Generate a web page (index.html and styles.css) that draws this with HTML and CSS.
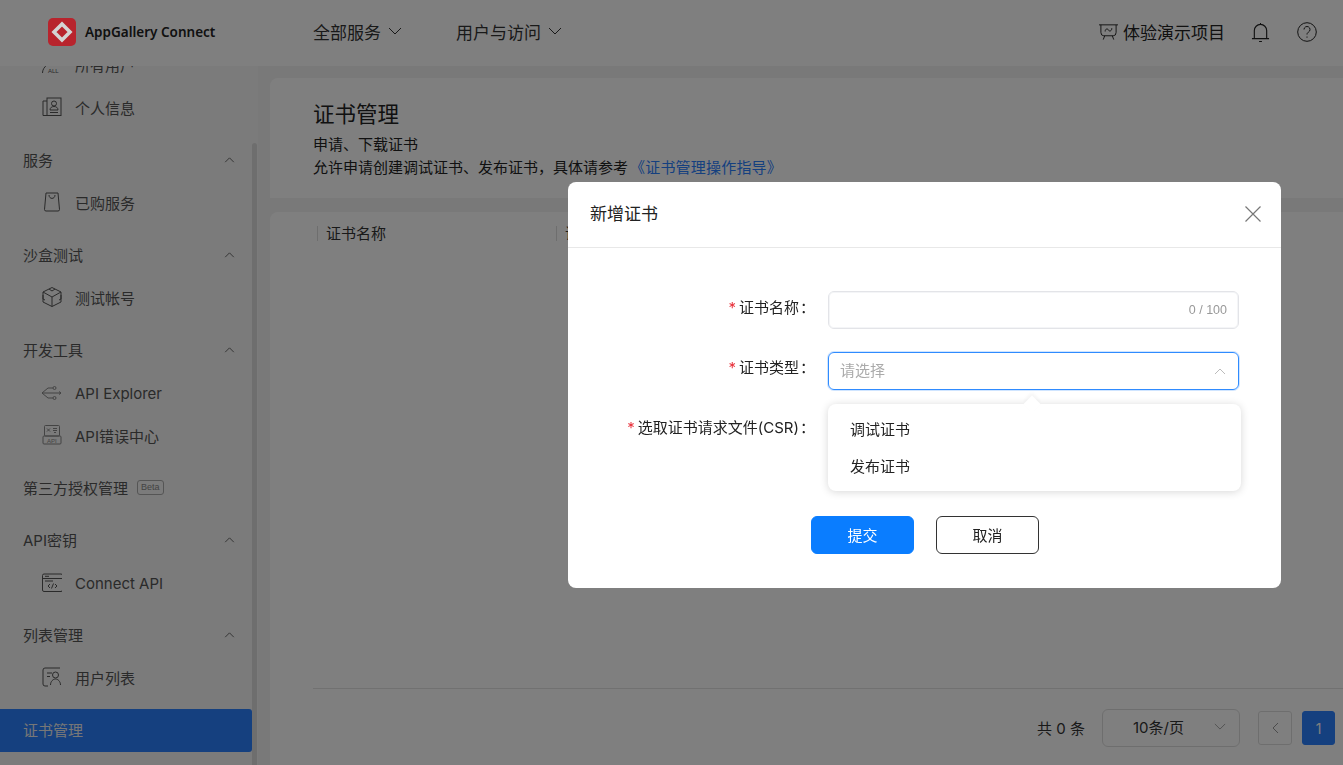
FILE: index.html
```html
<!DOCTYPE html>
<html lang="zh-CN">
<head>
    <meta charset="UTF-8">
    <meta name="viewport" content="width=device-width, initial-scale=1.0">
    <title>证书管理</title>
    <link rel="stylesheet" href="styles.css">
</head>
<body>
    <div class="app">
        <header class="topbar">
            <div class="brand">
                <svg class="logo" viewBox="0 0 28 28">
                    <rect width="28" height="28" rx="5" fill="#b8242d"/>
                    <path d="M14 6 22 14 14 22 6 14Z" fill="none" stroke="#d4d4d4" stroke-width="3.6"/>
                </svg>
                <span class="brand-name">AppGallery Connect</span>
            </div>
            <nav class="topnav">
                <a class="topnav-item">全部服务
                    <svg class="chev-down" viewBox="0 0 14 8"><path d="M1 1l6 6 6-6"/></svg>
                </a>
                <a class="topnav-item">用户与访问
                    <svg class="chev-down" viewBox="0 0 14 8"><path d="M1 1l6 6 6-6"/></svg>
                </a>
            </nav>
            <div class="topbar-right">
                <a class="demo">
                    <svg class="demo-icon" viewBox="0 0 22 20">
                        <path d="M1 3h20M3 3v8q0 3.500 3 3.500h10q3 0 3-3.500V3M7 14.500 5.500 18.500M15 14.500l1.500 4"/>
                        <path d="M7.500 10c0-3.500 3-3 3.500-1.500s3.500 1.500 3.500-2"/>
                    </svg>
                    体验演示项目
                </a>
                <svg class="bell" viewBox="0 0 20 22">
                    <path d="M1 17.500h18M3.500 17.500V9a6.500 6.500 0 0 1 13 0v8.500M10 1v1.500M8.500 20.500h3"/>
                </svg>
                <svg class="help" viewBox="0 0 20 20">
                    <circle cx="10" cy="10" r="9.300"/>
                    <path d="M7 7.500a3 3 0 1 1 4.500 2.600c-1 .6-1.500 1.200-1.500 2.400"/>
                    <path d="M10 14.500v1.200"/>
                </svg>
            </div>
        </header>

        <div class="workspace">
            <aside class="sidebar">
                <div class="scrollbar"></div>
                <ul class="menu">
                    <li class="menu-item">
                        <svg class="menu-icon" viewBox="0 0 20 20">
                            <path d="M.5 19c0-3 1.500-6 5-8.500"/>
                            <text class="icon-text" x="6" y="19">ALL</text>
                        </svg>
                        所有用户
                    </li>
                    <li class="menu-item">
                        <svg class="menu-icon" viewBox="0 0 20 20">
                            <path d="M5 4H1v14.500h4"/>
                            <rect x="5" y="1" width="14" height="17.500"/>
                            <circle cx="12" cy="6.500" r="2.500"/>
                            <path d="M8 13c0-2.500 2-3.500 4-3.500s4 1 4 3.500zM8 15.500h8"/>
                        </svg>
                        个人信息
                    </li>
                    <li class="menu-title">服务
                        <svg class="chev-up" viewBox="0 0 12 7"><path d="M1 6l5-5 5 5"/></svg>
                    </li>
                    <li class="menu-item">
                        <svg class="menu-icon" viewBox="0 0 20 20">
                            <path d="M4 1h12l1.500 16.500a1.500 1.500 0 0 1-1.500 1.500H4a1.500 1.500 0 0 1-1.500-1.500zM7 3c0 4.500 6 4.500 6 0"/>
                        </svg>
                        已购服务
                    </li>
                    <li class="menu-title">沙盒测试
                        <svg class="chev-up" viewBox="0 0 12 7"><path d="M1 6l5-5 5 5"/></svg>
                    </li>
                    <li class="menu-item">
                        <svg class="menu-icon" viewBox="0 0 20 20">
                            <path d="M10 .5l9 4.500v10l-9 4.500-9-4.500V5zM1 5l9 5 9-5M10 10v9.500M1 8v4l2 1M19 8v4l-2 1M7 2l3 2 3-2"/>
                        </svg>
                        测试帐号
                    </li>
                    <li class="menu-title">开发工具
                        <svg class="chev-up" viewBox="0 0 12 7"><path d="M1 6l5-5 5 5"/></svg>
                    </li>
                    <li class="menu-item menu-item-latin">
                        <svg class="menu-icon icon-light" viewBox="0 0 20 20">
                            <path d="M0 10h19M17 8.500l2 1.500-2 1.500M0 10l6-5h5M0 10l6 5h5"/>
                            <circle cx="12.500" cy="5" r="1.500"/>
                            <circle cx="12.500" cy="15" r="1.500"/>
                        </svg>
                        API Explorer
                    </li>
                    <li class="menu-item">
                        <svg class="menu-icon icon-light" viewBox="0 0 20 20">
                            <rect x="2.500" y="0.500" width="15" height="10.500" rx="1"/>
                            <rect x="1" y="11" width="18" height="8" rx="1"/>
                            <path d="M5 3.500l3 3M8 3.500l-3 3M11 3.500h4M11 5.500h4M12 7.500h2"/>
                            <text class="icon-text" x="5" y="17.500">API</text>
                        </svg>
                        API错误中心
                    </li>
                    <li class="menu-title menu-title-plain">第三方授权管理
                        <span class="beta">Beta</span>
                    </li>
                    <li class="menu-title">API密钥
                        <svg class="chev-up" viewBox="0 0 12 7"><path d="M1 6l5-5 5 5"/></svg>
                    </li>
                    <li class="menu-item menu-item-latin">
                        <svg class="menu-icon" viewBox="0 0 20 20">
                            <rect x="0.500" y="1" width="20" height="17.500" rx="1.500"/>
                            <path d="M.5 5.500h20M3 3.300h4M3 8h8M8 11l-2 2 2 2M13 11l2 2-2 2M11.500 10.500l-2 5"/>
                        </svg>
                        Connect API
                    </li>
                    <li class="menu-title">列表管理
                        <svg class="chev-up" viewBox="0 0 12 7"><path d="M1 6l5-5 5 5"/></svg>
                    </li>
                    <li class="menu-item">
                        <svg class="menu-icon" viewBox="0 0 20 20">
                            <path d="M18 1H3Q1 1 1 3v14q0 2 2 2h3M5 6h5M5 9.500h3"/>
                            <circle cx="13.500" cy="8" r="3"/>
                            <path d="M8.500 18c0-3.500 2.500-6 5-6s5 2.500 5 6"/>
                        </svg>
                        用户列表
                    </li>
                    <li class="menu-title menu-title-plain menu-active">证书管理</li>
                </ul>
            </aside>

            <main class="content">
                <section class="card intro">
                    <h1>证书管理</h1>
                    <p>申请、下载证书</p>
                    <p>允许申请创建调试证书、发布证书，具体请参考<a class="link">《证书管理操作指导》</a></p>
                </section>
                <section class="card list">
                    <div class="table-head">
                        <div class="col col-name">证书名称</div>
                        <div class="col">证书类型</div>
                    </div>
                    <div class="table-body"></div>
                    <div class="pager">
                        <span class="total">共 0 条</span>
                        <div class="page-size">10条/页
                            <svg class="chev-down chev-small" viewBox="0 0 14 8"><path d="M1 1l6 6 6-6"/></svg>
                        </div>
                        <button class="page-btn">
                            <svg class="chev-left" viewBox="0 0 7 12"><path d="M6 1L1 6l5 5"/></svg>
                        </button>
                        <button class="page-btn page-current">1</button>
                    </div>
                </section>
            </main>
        </div>
    </div>

    <div class="overlay">
        <div class="modal">
            <div class="modal-head">
                <span class="modal-title">新增证书</span>
                <svg class="close" viewBox="0 0 16 16"><path d="M.5.5l15 15M15.500.5l-15 15"/></svg>
            </div>
            <form class="modal-body">
                <div class="form-row">
                    <label class="form-label"><i>*</i>证书名称<span class="colon">：</span></label>
                    <div class="field">
                        <span class="counter">0 / 100</span>
                    </div>
                </div>
                <div class="form-row">
                    <label class="form-label"><i>*</i>证书类型<span class="colon">：</span></label>
                    <div class="field field-focus">
                        <span class="placeholder">请选择</span>
                        <svg class="chev-up chev-light" viewBox="0 0 12 7"><path d="M1 6l5-5 5 5"/></svg>
                        <div class="popover">
                            <span class="popover-arrow"></span>
                            <div class="option">调试证书</div>
                            <div class="option">发布证书</div>
                        </div>
                    </div>
                </div>
                <div class="form-row form-row-last">
                    <label class="form-label"><i>*</i>选取证书请求文件(CSR)<span class="colon">：</span></label>
                </div>
                <div class="form-actions">
                    <button type="button" class="btn btn-primary">提交</button>
                    <button type="button" class="btn">取消</button>
                </div>
            </form>
        </div>
    </div>
</body>
</html>
```

FILE: styles.css
```css
* {
    box-sizing: border-box;
}
body {
    margin: 0;
    font-family: Inter, "Noto Sans CJK SC", sans-serif;
    font-size: 15px;
    color: #333;
    background-color: #f2f2f2;
    overflow: hidden;
}
svg {
    fill: none;
    stroke: currentColor;
    stroke-width: 1;
    flex: none;
}
.app {
    display: flex;
    flex-direction: column;
    height: 100vh;
}

/* top bar */
.topbar {
    display: flex;
    align-items: center;
    height: 66px;
    flex: none;
    padding: 0 26px 2px 48px;
    background-color: #fff;
}
.brand {
    display: flex;
    align-items: center;
    width: 265px;
}
/* the logo sits above the dialog's dimming layer in the reference */
.logo {
    width: 28px;
    height: 28px;
    stroke: none;
    margin-right: 9px;
    position: relative;
    z-index: 11;
}
.brand-name {
    font-family: "Noto Sans", sans-serif;
    font-size: 13.5px;
    font-weight: 600;
    color: #222;
}
.topnav {
    display: flex;
    gap: 54px;
    margin-bottom: 2px;
}
.topnav-item {
    display: flex;
    align-items: center;
    gap: 7px;
    font-size: 17px;
}
.chev-down {
    width: 14px;
    height: 8px;
}
.topbar-right {
    display: flex;
    align-items: center;
    margin-left: auto;
    color: #222;
}
.demo {
    display: flex;
    align-items: center;
    gap: 4px;
    font-size: 17px;
    margin-right: 26px;
    margin-bottom: 2px;
}
.demo-icon {
    width: 21px;
    height: 19px;
}
.bell {
    width: 19px;
    height: 21px;
    margin-right: 27px;
    stroke-width: 1.2;
}
.help {
    width: 20px;
    height: 20px;
}

/* sidebar */
.workspace {
    display: flex;
    flex: 1;
    min-height: 0;
}
.sidebar {
    width: 258px;
    flex: none;
    position: relative;
    overflow: hidden;
    background-color: #f6f6f6;
}
.scrollbar {
    position: absolute;
    right: 1px;
    top: 77px;
    bottom: 0;
    width: 5px;
    background-color: #ddd;
    border-radius: 3px 3px 0 0;
}
.menu {
    list-style: none;
    margin: -22.5px 0 0;
    padding: 0;
    width: 252px;
    color: #555;
}
.menu-item {
    display: flex;
    align-items: center;
    height: 43px;
    padding: 0 0 2px 42px;
}
.menu-item-latin {
    padding-bottom: 0;
}
.menu-icon {
    width: 20px;
    height: 20px;
    margin-right: 13px;
    color: #555;
}
.icon-light {
    color: #888;
}
.icon-text {
    font-family: "Liberation Sans", sans-serif;
    font-size: 6px;
    fill: currentColor;
    stroke: none;
}
.menu-title {
    display: flex;
    align-items: center;
    height: 43px;
    margin-top: 9px;
    padding: 0 17px 2px 23px;
    justify-content: space-between;
}
.menu-title-plain {
    justify-content: flex-start;
}
.chev-up {
    width: 11px;
    height: 6px;
    margin-top: 2px;
    color: #555;
}
.beta {
    font-family: "Liberation Sans", sans-serif;
    font-size: 9px;
    line-height: 13px;
    margin-left: 9px;
    padding: 0 3px;
    color: #888;
    border: 1px solid #aaa;
    border-radius: 3px;
}
.menu-active {
    margin-top: 9px;
    color: #eee;
    background-color: #2a80fe;
    border-radius: 0 3px 3px 0;
}

/* page content */
.content {
    flex: 1;
    min-width: 0;
    display: flex;
    flex-direction: column;
    gap: 14px;
    padding: 12px 0 0 12px;
}
.card {
    background-color: #fff;
    border-radius: 8px 0 0 0;
}
.intro {
    height: 120px;
    padding: 20px 0 0 43px;
    color: #222;
}
.intro h1 {
    margin: 0 0 3px;
    font-size: 21.5px;
    font-weight: 400;
    line-height: 32px;
    color: #222;
}
.intro p {
    margin: 0;
    line-height: 23px;
}
.link {
    margin-left: 2px;
    letter-spacing: 0.2px;
    color: #2a80fe;
}
.list {
    flex: 1;
    display: flex;
    flex-direction: column;
    min-height: 0;
}
.table-head {
    display: flex;
    height: 42px;
    align-items: center;
    padding-left: 47px;
}
.col {
    width: 239px;
    padding-left: 8px;
    line-height: 15px;
    border-left: 1px solid #ddd;
}
.table-body {
    flex: 1;
}
.pager {
    display: flex;
    align-items: center;
    height: 77px;
    margin-left: 43px;
    padding: 2px 8px 0 0;
    justify-content: flex-end;
    border-top: 1px solid #e2e2e2;
}
.total {
    margin-right: 17px;
    margin-bottom: 2px;
}
.page-size {
    display: flex;
    align-items: center;
    justify-content: space-between;
    width: 138px;
    height: 38px;
    padding: 0 13px 3px 30px;
    margin-right: 18px;
    border: 1px solid #ddd;
    border-radius: 6px;
}
.chev-small {
    width: 12px;
    height: 7px;
    color: #999;
}
.page-btn {
    display: flex;
    align-items: center;
    justify-content: center;
    width: 34px;
    height: 34px;
    padding: 0;
    font: inherit;
    font-size: 14px;
    color: #999;
    background-color: #fff;
    border: 1px solid #ddd;
    border-radius: 3px;
}
.page-btn + .page-btn {
    margin-left: 10px;
}
.page-current {
    width: 33px;
    color: #fff;
    background-color: #2a80fe;
    border-color: #2a80fe;
}
.chev-left {
    width: 7px;
    height: 12px;
}

/* dialog */
.overlay {
    position: fixed;
    top: 0;
    right: 0;
    bottom: 0;
    left: 0;
    z-index: 10;
    padding: 182px 62px 0 568px;
    background-color: rgba(0, 0, 0, 0.5);
}
.modal {
    height: 406px;
    background-color: #fff;
    border-radius: 8px;
}
.modal-head {
    display: flex;
    align-items: center;
    justify-content: space-between;
    height: 66px;
    padding: 0 20px 1px 22px;
    font-size: 17px;
    color: #222;
    border-bottom: 1px solid #e8e8e8;
}
.modal-title {
    margin-bottom: 4px;
}
.close {
    width: 16px;
    height: 16px;
    color: #777;
    stroke-width: 1.2;
}
.modal-body {
    padding-top: 43px;
}
.form-row {
    display: flex;
    height: 38px;
    margin-bottom: 22px;
}
.form-row + .form-row .field {
    margin-top: 1px;
}
.form-row-last {
    margin-bottom: 67px;
}
.form-label {
    width: 247px;
    flex: none;
    margin-right: 13px;
    text-align: right;
    line-height: 34px;
    color: #222;
}
.form-label i {
    font-style: normal;
    color: #e8303a;
    margin-right: 3px;
}
.colon {
    margin-left: 1px;
}
.field {
    position: relative;
    display: flex;
    align-items: center;
    justify-content: space-between;
    width: 411px;
    height: 38px;
    padding: 0 11px;
    border: 1px solid #e3e4e8;
    border-radius: 6px;
    box-shadow: inset 0 0 0 1px #f4f5f7;
}
.field-focus {
    border-color: #2f8bff;
    box-shadow: 0 0 0 1px rgba(120, 180, 255, 0.35);
}
.counter {
    margin-left: auto;
    font-family: "Liberation Sans", sans-serif;
    font-size: 12.5px;
    color: #999;
}
.placeholder {
    margin-bottom: 3px;
    color: #aaa;
}
.chev-light {
    width: 12px;
    height: 7px;
    margin-top: 0;
    margin-right: 1px;
    color: #bbb;
}
.popover {
    position: absolute;
    top: 51px;
    left: -1px;
    width: 413px;
    height: 87px;
    padding: 7px 0;
    background-color: #fff;
    border-radius: 8px;
    box-shadow: 0 1px 8px rgba(0, 0, 0, 0.16);
}
.popover-arrow {
    position: absolute;
    top: -6px;
    left: 198px;
    width: 12px;
    height: 12px;
    background-color: #fff;
    transform: rotate(45deg);
    box-shadow: -2px -2px 4px rgba(0, 0, 0, 0.05);
}
.option {
    position: relative;
    height: 37px;
    line-height: 37px;
    padding-left: 22px;
    color: #222;
}
.form-actions {
    display: flex;
    gap: 22px;
    padding-left: 243px;
}
.btn {
    width: 103px;
    height: 38px;
    padding: 0 0 2px;
    font: inherit;
    color: #222;
    background-color: #fff;
    border: 1px solid #333;
    border-radius: 6px;
}
.btn-primary {
    color: #fff;
    background-color: #0a7dff;
    border-color: #0a7dff;
}
```
